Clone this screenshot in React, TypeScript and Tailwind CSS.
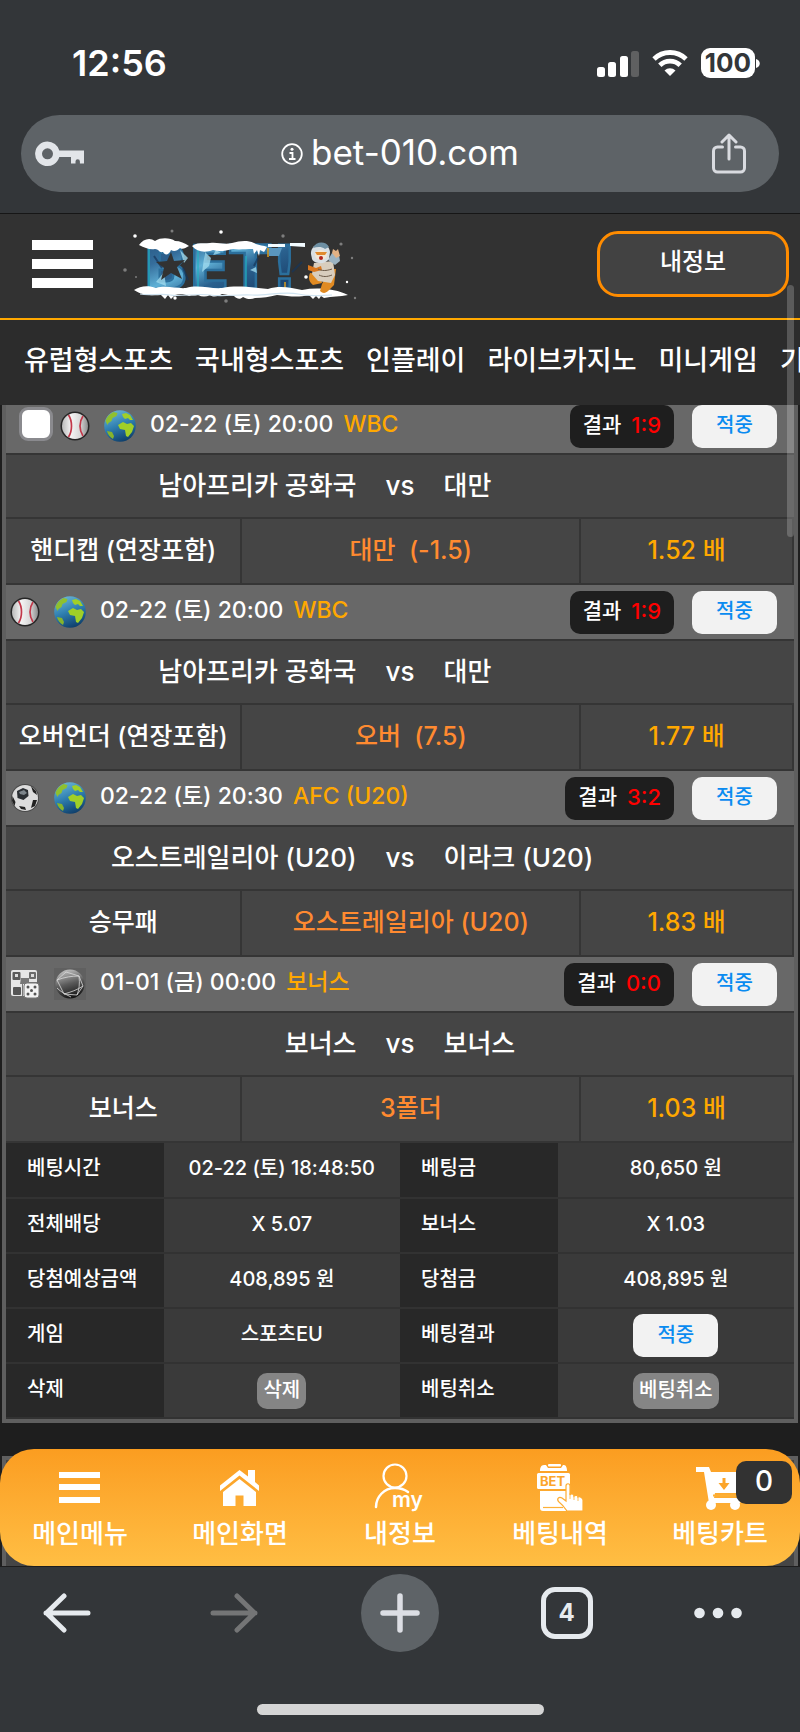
import { type ReactNode } from 'react';
import { clsx } from 'clsx';

type Sport = 'baseball' | 'soccer' | 'dice';

interface Bet {
    id: number;
    sport: Sport;
    date: string;
    league: string;
    score: string;
    home: string;
    away: string;
    market: string;
    pick: string;
    odds: string;
    selectable?: boolean;
}

const NAV = ['유럽형스포츠', '국내형스포츠', '인플레이', '라이브카지노', '미니게임', '기타'];

const BETS: Bet[] = [
    { id: 1, sport: 'baseball', date: '02-22 (토) 20:00', league: 'WBC', score: '1:9', home: '남아프리카 공화국', away: '대만', market: '핸디캡 (연장포함)', pick: '대만  (-1.5)', odds: '1.52 배', selectable: true },
    { id: 2, sport: 'baseball', date: '02-22 (토) 20:00', league: 'WBC', score: '1:9', home: '남아프리카 공화국', away: '대만', market: '오버언더 (연장포함)', pick: '오버  (7.5)', odds: '1.77 배' },
    { id: 3, sport: 'soccer', date: '02-22 (토) 20:30', league: 'AFC (U20)', score: '3:2', home: '오스트레일리아 (U20)', away: '이라크 (U20)', market: '승무패', pick: '오스트레일리아 (U20)', odds: '1.83 배' },
    { id: 4, sport: 'dice', date: '01-01 (금) 00:00', league: '보너스', score: '0:0', home: '보너스', away: '보너스', market: '보너스', pick: '3폴더', odds: '1.03 배' },
];

const BaseballIcon = () => (
    <svg viewBox="0 0 32 32" className="h-8 w-8" aria-hidden="true">
        <defs>
            <linearGradient id="leather" x1="0" y1="0" x2="1" y2="0">
                <stop offset="0" stopColor="#b9b9b9" />
                <stop offset="0.35" stopColor="#f4f4f4" />
                <stop offset="0.7" stopColor="#d8d8d8" />
                <stop offset="1" stopColor="#8c8c8c" />
            </linearGradient>
        </defs>
        <circle cx="16" cy="16" r="14.5" fill="#262626" />
        <circle cx="16" cy="16" r="13" fill="url(#leather)" />
        <path d="M9.500 5c4 6 4 16 0 22M24 6c-4 6-4 14 0 20" fill="none" stroke="#c2384a" strokeWidth="1.700" />
    </svg>
);

const SoccerIcon = () => (
    <svg viewBox="0 0 32 32" className="h-8 w-8" aria-hidden="true">
        <circle cx="16" cy="16" r="14" fill="#4a4a4a" />
        <circle cx="16" cy="16" r="13" fill="#dcdcdc" />
        <path d="M8 9l6-3 5 2 .5 6-5 4-6-2z" fill="#2b2f33" />
        <path d="M10 10l5-2 3 3-3 2-4-1z" fill="#7d858b" />
        <path d="M22 4l5 5 1 4-4-3zM3.500 14l3 6-1 4-2.500-5zM24 18l4 0-2 6-4 2zM10 24l6 1 1 3-5-1z" fill="#222" />
    </svg>
);

const DiceIcon = () => (
    <svg viewBox="0 0 32 32" className="h-8 w-8" aria-hidden="true">
        <rect x="2" y="2" width="26" height="26" rx="2" fill="#e6e6e6" />
        <rect x="3.500" y="4" width="8" height="8" rx="1" fill="#5a5a5a" />
        <rect x="6" y="6" width="3" height="3" fill="#ddd" />
        <rect x="20" y="4" width="7" height="7" rx="1" fill="#6b6b6b" />
        <rect x="22" y="6" width="3" height="3" fill="#ddd" />
        <rect x="4" y="19" width="8" height="8" rx="1" fill="#555" />
        <path d="M12 10h8v4h8v2H14v12h-1V16h-2z" fill="#777" />
        <rect x="15" y="15" width="15" height="15" rx="3" fill="#f3f3f3" stroke="#777" strokeWidth="1" />
        <g fill="#555">
            <circle cx="19" cy="19" r="1.500" />
            <circle cx="26" cy="19" r="1.500" />
            <circle cx="22.500" cy="22.500" r="1.500" />
            <circle cx="19" cy="26" r="1.500" />
            <circle cx="26" cy="26" r="1.500" />
        </g>
    </svg>
);

const GlobeIcon = () => (
    <svg viewBox="0 0 32 32" className="h-8 w-8" aria-hidden="true">
        <defs>
            <linearGradient id="sea" x1="0.2" y1="0" x2="0.6" y2="1">
                <stop offset="0" stopColor="#6db9d8" />
                <stop offset="0.5" stopColor="#2f7fb0" />
                <stop offset="1" stopColor="#0f3f6b" />
            </linearGradient>
        </defs>
        <circle cx="16" cy="16" r="15.800" fill="url(#sea)" />
        <path d="M1.500 11c1-4 4-7 8-9l4 1-1 3-4 2-1 3-3 2-1 2z" fill="#8fc02f" />
        <path d="M18 4l4-1 4 2 3 5-3 0-2-2-3 1-2-2zM14 15l5-3 4 2 4-1 3 3-2 6-4 5-2-1-1-6-5-1z" fill="#a0cf28" />
        <path d="M3 21l5 1 2 4-1 3c-3-2-5-4-6-8z" fill="#86b42c" />
    </svg>
);

const WireGlobeIcon = () => (
    <svg viewBox="0 0 32 32" className="h-8 w-8" aria-hidden="true">
        <defs>
            <linearGradient id="wire" x1="0.3" y1="0" x2="0.6" y2="1">
                <stop offset="0" stopColor="#c4c4c4" />
                <stop offset="0.5" stopColor="#5a5a5a" />
                <stop offset="1" stopColor="#101010" />
            </linearGradient>
        </defs>
        <rect width="32" height="32" fill="#606060" />
        <circle cx="16" cy="16" r="14.500" fill="url(#wire)" />
        <path d="M3 12l9-8 13 4 4 10-6 9-13-1-7-14zM3 12c8-3 15-4 22-4M25 8c1 8 0 14-2 19M10 26c7-2 13-4 19-8M3 20c4 4 8 6 14 9" fill="none" stroke="#d9d9d9" strokeWidth="0.800" />
    </svg>
);

const SPORT_ICONS: Record<Sport, ReactNode> = {
    baseball: <BaseballIcon />,
    soccer: <SoccerIcon />,
    dice: <DiceIcon />,
};

const Logo = () => (
    <svg viewBox="120 226 240 80" className="h-20 w-60" role="img" aria-label="BET!">
        <defs>
            <linearGradient id="ice" x1="0" y1="0" x2="1" y2="1">
                <stop offset="0" stopColor="#23527d" />
                <stop offset="0.25" stopColor="#356d9b" />
                <stop offset="0.42" stopColor="#5fb0d6" />
                <stop offset="0.58" stopColor="#2a618f" />
                <stop offset="0.8" stopColor="#1c4570" />
                <stop offset="1" stopColor="#3a6a9c" />
            </linearGradient>
        </defs>
        {/* fills the counters of the B so that only the star stays open */}
        <rect x="156" y="250" width="22" height="34" fill="#2c5f8c" />
        <text x="143" y="289" fontFamily="DejaVu Sans" fontWeight="700" fontSize="60" fill="url(#ice)" stroke="#2b6f9c" strokeWidth="2.500">BET!</text>
        <path d="M149 247v41M198 249v38M246 256v31" fill="none" stroke="#22b3c2" strokeWidth="1.200" />
        <path d="M156 282l8-10 2 14zM180 250l8 8-4 5zM205 252l6 6-2 8-7 6zM216 250l5 3-8 2zM250 270l6-3 1 6z" fill="#9fd9ee" opacity="0.8" />
        <path d="M154 256l8 12M183 268l5 12M258 258l-4 8M292 272l10-10" fill="none" stroke="#15355a" strokeWidth="2" opacity="0.7" />
        <path d="M171 252l3 9 11-1-8 7 5 12-11-6-10 7 3-12-8-6 11-1z" fill="#323232" />
        <path d="M139 245c4-6 11-8 16-4 6-4 16-3 20 0 5 0 10 2 14 5-4 2-6 4-9 2-3 3-6 4-9 2-2 5-6 6-8 2-4 1-4-3-8-3-5 1-10-1-16-4z" fill="#fff" />
        <path d="M192 246c5-4 12-2 18-3 8-1 14 2 22 0 8-2 15-3 22 0 5 3 10 2 13 4l-3 5-4-2-1 6-2-6-3 4-1-5c-8 0-14 1-20 0-8 2-14 3-20 1-8 3-16 2-21-4z" fill="#fff" />
        <path d="M268 244h17v3h-17zM290 243h15v4l-15-1z" fill="#f2fbff" />
        <path d="M269 248h13l-3 8h-10z" fill="#5a97bf" />
        <path d="M268 248v9M285 282v6" stroke="#d99a1c" strokeWidth="1.500" />
        <path d="M134 290c6-4 14-5 22-2 10-3 22 1 30 0 12-4 24 1 36 0 14-3 28-1 46 1 12-4 24-1 34 1 16-3 34-1 46 5-8 2-16 1-24 3l-3-2-2 3-3-3-3 3-4-4c-12 3-20 1-32 0-8 2-14 3-22 3-4 2-9 1-12-1-3 3-6 2-9-1l-12-2c-4 2-8 4-12 1-4 2-8 2-12 0-4 1-6 0-9 1-4-2-10-2-14-1l-4 4-3-4-3 4-4-4c-9 1-20 0-27-5z" fill="#fff" />
        <path d="M140 294c10 2 20-1 30 1s28-2 40 0 30-1 42 0 32-4 46-1 24 1 34 1" fill="none" stroke="#cfe3f0" strokeWidth="1.200" />
        {/* mascot */}
        <path d="M310 273c-2 5-1 9 3 12l9-2-2-9zM322 284l-2 7c3 3 6 2 8 0l6-6 2-16-6 0z" fill="#e08a22" />
        <path d="M314 263l19-2 2 14-4 8-13-2-6-7z" fill="#d8cdbd" />
        <path d="M308 265l8 3 5-2 1 4-8 2-6-2z" fill="#d9771f" />
        <path d="M328 260l7 5 5-4-1-6-7-2z" fill="#9bb3c2" />
        <path d="M332 253l1-4 3 2 2-2 2 7-4 2z" fill="#e2b184" />
        <path d="M311 254c-1-12 18-14 19-2l-1 7c-4 6-15 5-17 0z" fill="#d9dfe3" />
        <path d="M313 248c3-7 13-7 16-1l-4 2c-4-3-8-2-12-1z" fill="#6d8fa3" />
        <ellipse cx="321" cy="255" rx="6" ry="5" fill="#f3e6d4" />
        <path d="M315 252h12l-2 3h-8z" fill="#e08a2e" />
        <circle cx="321" cy="258" r="2" fill="#b3261e" />
        <path d="M318 269c4 2 8 2 14 0M319 275c4 2 8 2 13 0" fill="none" stroke="#6b5a48" strokeWidth="1" />
        <g fill="#fff">
            <circle cx="135" cy="236" r="1.800" />
            <circle cx="221" cy="232" r="1.800" />
            <circle cx="306" cy="277" r="1.800" />
            <circle cx="347" cy="282" r="1.200" />
            <circle cx="175" cy="298" r="1.700" />
        </g>
        <g fill="#7d7d7d">
            <circle cx="172" cy="231" r="1.500" />
            <circle cx="283" cy="236" r="1.700" />
            <circle cx="341" cy="244" r="1.600" />
            <circle cx="352" cy="258" r="1.200" />
            <circle cx="125" cy="270" r="1.800" />
            <circle cx="136" cy="277" r="1" />
            <circle cx="226" cy="301" r="1.800" />
            <circle cx="355" cy="298" r="1.200" />
        </g>
    </svg>
);

const StatusBar = () => (
    <div className="flex h-[115px] items-start justify-between pt-[43px] pr-10 pl-[72px]">
        <span className="text-[36px] leading-[40px] font-semibold">12:56</span>
        <div className="flex h-10 items-center">
            <svg viewBox="0 0 42 27" className="h-[27px] w-[42px]" aria-label="signal">
                <rect x="0" y="17" width="8" height="10" rx="2.500" fill="#fff" />
                <rect x="11" y="12" width="8" height="15" rx="2.500" fill="#fff" />
                <rect x="23" y="6" width="8" height="21" rx="2.500" fill="#fff" />
                <rect x="34" y="1" width="8" height="26" rx="2.500" fill="#5f6061" />
            </svg>
            <svg viewBox="0 0 36 26" className="ml-[13px] h-[26px] w-9" aria-label="wifi">
                <g fill="none" stroke="#fff" strokeWidth="4.800">
                    <path d="M2 9a23 23 0 0 1 32 0" />
                    <path d="M7.800 15.300a14.700 14.700 0 0 1 20.400 0" />
                </g>
                <path d="M18 26l-5.500-5.500a8 8 0 0 1 11 0z" fill="#fff" />
            </svg>
            <span className="ml-[13px] flex h-[30px] w-[54px] items-center justify-center rounded-[9px] bg-white text-[26px] leading-[30px] font-bold text-[#333639]">100</span>
            <svg viewBox="0 0 4 9" className="ml-px h-[9px] w-1" aria-hidden="true">
                <path d="M0 0c5 1 5 8 0 9z" fill="#fff" />
            </svg>
        </div>
    </div>
);

const AddressBar = () => (
    <div className="px-[21px] pb-[21px]">
        <div className="flex h-[77px] items-center justify-between rounded-full bg-[#5e6367] pr-8 pl-3.5">
            <button aria-label="비밀번호" className="flex w-[60px]">
                <svg viewBox="0 0 50 26" className="h-[26px] w-[50px]">
                    <path d="M12.500.500a12.300 12.300 0 1 0 11.800 15.500h11.700v6.500h4.500v-2a2.200 2.200 0 0 1 4.400 0v2h4.100V9.500H24.300A12.300 12.300 0 0 0 12.500.500zm0 6.800a5.500 5.500 0 1 1 0 11 5.500 5.500 0 0 1 0-11z" fill="#e2e5e9" fillRule="evenodd" />
                </svg>
            </button>
            <div className="flex items-center gap-2 pb-1 pl-[18px]">
                <svg viewBox="0 0 22 22" className="mt-1 h-[22px] w-[22px]" aria-hidden="true">
                    <circle cx="11" cy="11" r="9.800" fill="none" stroke="#fff" strokeWidth="1.800" />
                    <circle cx="11" cy="6.300" r="1.500" fill="#fff" />
                    <path d="M8.500 10h3v5.500M8 16h6.500" fill="none" stroke="#fff" strokeWidth="1.800" />
                </svg>
                <span className="text-[35px] leading-[40px]">bet-010.com</span>
            </div>
            <button aria-label="공유" className="flex w-[60px] justify-end pr-px">
                <svg viewBox="0 0 34 41" className="h-[41px] w-[34px]" fill="none" stroke="#d9dbe0" strokeWidth="3" strokeLinecap="round" strokeLinejoin="round">
                    <path d="M10.500 14H5.500a4 4 0 0 0-4 4v17a4 4 0 0 0 4 4h23a4 4 0 0 0 4-4V18a4 4 0 0 0-4-4h-5M17 26V3M10 9l7-7 7 7" />
                </svg>
            </button>
        </div>
    </div>
);

const Badge = ({ className, children }: { className?: string; children: ReactNode }) => (
    <span className={clsx('inline-flex h-[43px] items-center justify-center rounded-[10px] pb-0.5', className)}>{children}</span>
);

const Hit = () => <Badge className="w-[85px] bg-[#f2f2f2] text-xl text-[#0a8bf0]">적중</Badge>;

const BetItem = ({ bet }: { bet: Bet }) => (
    <li>
        <div className="flex h-14 items-center border-b-2 border-[#353535] bg-[#686868] pr-[17px] pl-[3px]">
            {bet.selectable && (
                <input
                    type="checkbox"
                    aria-label="베팅 선택"
                    className="mr-1.5 mb-1 ml-2.5 h-[34px] w-[34px] appearance-none rounded-[9px] border-[3px] border-[#8a8a8e] bg-white"
                />
            )}
            {SPORT_ICONS[bet.sport]}
            <span className="ml-[13px]">{bet.sport === 'dice' ? <WireGlobeIcon /> : <GlobeIcon />}</span>
            <span className="ml-3.5 pb-1 text-[23px]">{bet.date}</span>
            <span className="ml-2.5 pb-1 text-[23px] text-[#ffa800]">{bet.league}</span>
            <Badge className="ml-auto gap-2.5 bg-[#1e1e1e] px-[13px] text-[21px]">
                결과 <span className="text-[22px] text-[#ff0000]">{bet.score}</span>
            </Badge>
            <span className="ml-[18px] flex"><Hit /></span>
        </div>
        <div className="grid h-16 grid-cols-[1fr_auto_1fr] items-center gap-[29px] border-b-2 border-[#353535] bg-[#454545] pb-0.5 text-[26px]">
            <span className="text-right">{bet.home}</span>
            <span>vs</span>
            <span>{bet.away}</span>
        </div>
        <div className="grid h-[66px] grid-cols-[30%_43%_27%] border-b-2 border-[#353535] bg-[#454545] text-center text-[25px] leading-[62px] whitespace-pre">
            <span className="border-r-2 border-[#353535]">{bet.market}</span>
            <span className="border-r-2 border-[#353535] text-[#ff8a30]">{bet.pick}</span>
            <span className="border-r-2 border-[#353535] text-[#ffa800]">{bet.odds}</span>
        </div>
    </li>
);

const SmallButton = ({ children }: { children: ReactNode }) => (
    <button className="inline-flex h-9 items-center justify-center rounded-[10px] bg-[#858585] px-1.5 pb-0.5">{children}</button>
);

const SUMMARY: [string, ReactNode, string, ReactNode][] = [
    ['베팅시간', '02-22 (토) 18:48:50', '베팅금', '80,650 원'],
    ['전체배당', 'X 5.07', '보너스', 'X 1.03'],
    ['당첨예상금액', '408,895 원', '당첨금', '408,895 원'],
    ['게임', '스포츠EU', '베팅결과', <Hit />],
    ['삭제', <SmallButton>삭제</SmallButton>, '베팅취소', <SmallButton>베팅취소</SmallButton>],
];

const Summary = () => (
    <table className="w-full table-fixed border-collapse text-xl">
        <colgroup>
            <col className="w-1/5" />
            <col className="w-3/10" />
            <col className="w-1/5" />
            <col className="w-3/10" />
        </colgroup>
        <tbody>
            {SUMMARY.map(([labelA, valueA, labelB, valueB]) => (
                <tr key={labelA} className="h-[55px] border-b-2 border-[#323232]">
                    <th scope="row" className="bg-[#282828] p-0 pb-1 pl-[21px] text-left font-medium">{labelA}</th>
                    <td className="bg-[#3a3a3a] p-0"><span className={clsx('flex justify-center', typeof valueA === 'string' && 'pb-1')}>{valueA}</span></td>
                    <th scope="row" className="bg-[#282828] p-0 pb-1 pl-[21px] text-left font-medium">{labelB}</th>
                    <td className="bg-[#3a3a3a] p-0"><span className={clsx('flex justify-center', typeof valueB === 'string' && 'pb-1')}>{valueB}</span></td>
                </tr>
            ))}
        </tbody>
    </table>
);

const TABS: { label: string; icon: ReactNode }[] = [
    {
        label: '메인메뉴',
        icon: <path d="M4 11h41v6H4zM4 23h41v6H4zM4 36h41v6H4z" fill="#fff" />,
    },
    {
        label: '메인화면',
        icon: (
            <g fill="#fff">
                <path d="M24.500 9L5 24.500v5.500l19.500-15.500L44 30v-5.500l-4-3.500V9h-7v6.500z" />
                <path d="M24.500 18L8 31v14h12.500V34.500h8V45H41V31z" />
            </g>
        ),
    },
    {
        label: '내정보',
        icon: (
            <>
                <circle cx="20" cy="15" r="11.500" fill="none" stroke="#fff" strokeWidth="2.200" />
                <path d="M1 46c0-10 8-19 19-19 5 0 9 1 13 4" fill="none" stroke="#fff" strokeWidth="2.500" strokeLinecap="round" />
                <text x="17" y="46" fontFamily="Inter" fontWeight="600" fontSize="21" fill="#fff">my</text>
            </>
        ),
    },
    {
        label: '베팅내역',
        icon: (
            <>
                <path d="M5 10c0-3 1-6 4-6h2l2 3h13l2-3h1c2 0 3 3 3 6z" fill="#fff" />
                <rect x="13" y="3" width="13" height="2.500" rx="1" fill="#fff" />
                <rect x="2" y="12" width="33" height="16" rx="1.500" fill="#fff" />
                <text x="5" y="25" fontFamily="Inter" fontWeight="700" fontSize="13" fill="#fca52a">BET</text>
                <path d="M5 30h26v20H8a3 3 0 0 1-3-3z" fill="#fff" />
                <path d="M8 46.500h20" stroke="#fdb138" strokeWidth="1.200" />
                <path d="M31 25c0-3 4-3 4 0v9c1-2 4-1 4 1 1-1 4-1 4 1 2-1 5 1 5 3v11H32c-2-3-4-6-8-9-3-3 0-6 3-4l4 3z" fill="#fff" stroke="#fdac33" strokeWidth="1.200" />
                <path d="M35 32v6M39 34v5M43 35v5" stroke="#fdb138" strokeWidth="0.800" />
            </>
        ),
    },
    {
        label: '베팅카트',
        icon: (
            <>
                <path d="M1 6h13l2 5h33v21H20l-1 5h28l-2 5H14L9 11H1z" fill="#fff" />
                <path d="M18 34.500h30" stroke="#fdb037" strokeWidth="2" />
                <path d="M27.500 17h3v5h4l-5.500 7-5.500-7h4z" fill="#fca52a" />
                <circle cx="16" cy="44" r="5" fill="#fff" />
                <circle cx="40" cy="44" r="5" fill="#fff" />
            </>
        ),
    },
];

const TabBar = () => (
    <div className="relative bg-[#1e1e1e] pt-[26px]">
        {/* top of the next bet slip, showing behind the rounded corners */}
        <div className="absolute inset-x-0.5 top-[33px] bottom-0 border-4 border-b-0 border-[#5f5f5f] bg-[#454545]" />
        <nav className="relative grid h-[117px] grid-cols-5 rounded-[34px] bg-linear-to-b from-[#fb9d20] to-[#ffbe43]">
            {TABS.map((tab) => (
                <button key={tab.label} className="flex flex-col items-center pt-3">
                    <svg viewBox="0 0 50 52" className="h-[52px] w-[50px] overflow-visible" aria-hidden="true">{tab.icon}</svg>
                    <span className="text-[26px] leading-[42px]">{tab.label}</span>
                </button>
            ))}
            <span className="absolute top-3 right-2 flex h-[43px] w-[56px] items-center justify-center rounded-[10px] bg-[#323232] pb-1 text-[28px]">0</span>
        </nav>
    </div>
);

const BrowserToolbar = () => (
    <footer className="border-t border-[#1e1e1e] bg-[#333639]">
        <div className="flex h-[92px] items-center justify-between px-7">
            <button aria-label="뒤로" className="flex w-[78px] justify-center">
                <svg viewBox="0 0 48 40" className="h-10 w-12" fill="none" stroke="#e6eaee" strokeWidth="5" strokeLinecap="round" strokeLinejoin="round">
                    <path d="M45 20H3M21 3L3.500 20 21 37" />
                </svg>
            </button>
            <button aria-label="앞으로" className="flex w-[78px] justify-center">
                <svg viewBox="0 0 48 40" className="h-10 w-12" fill="none" stroke="#747576" strokeWidth="5" strokeLinecap="round" strokeLinejoin="round">
                    <path d="M3 20h42M27 3l17.500 17L27 37" />
                </svg>
            </button>
            <button aria-label="새 탭" className="flex h-[78px] w-[78px] items-center justify-center rounded-full bg-[#5e6367]">
                <svg viewBox="0 0 40 40" className="h-10 w-10" stroke="#dcdee4" strokeWidth="5.500" strokeLinecap="round">
                    <path d="M20 3v34M3 20h34" />
                </svg>
            </button>
            <button aria-label="탭 4개" className="flex w-[78px] justify-center">
                <span className="flex h-[52px] w-[52px] items-center justify-center rounded-[14px] border-[5px] border-[#e6eaee] text-2xl font-bold text-[#e6eaee]">4</span>
            </button>
            <button aria-label="더보기" className="flex w-[78px]">
                <svg viewBox="0 0 48 12" className="h-3 w-12" fill="#e6eaee">
                    <circle cx="5.500" cy="6" r="5.300" />
                    <circle cx="24" cy="6" r="5.300" />
                    <circle cx="42.500" cy="6" r="5.300" />
                </svg>
            </button>
        </div>
        <div className="flex h-[73px] justify-center pt-[45px]">
            <div className="h-[11px] w-[287px] rounded-full bg-[#d5d5d5]" />
        </div>
    </footer>
);

export default function App() {
    return (
        <div className="relative overflow-hidden bg-[#1e1e1e] font-['Inter','Noto_Sans_CJK_KR',sans-serif] font-medium text-white">
            <div className="border-b border-[#161616] bg-[#333639] font-normal">
                <StatusBar />
                <AddressBar />
            </div>

            <header className="flex h-[106px] items-center border-b-2 border-[#ffa800] bg-[#323232] pr-[11px] pb-1 pl-8">
                <button aria-label="메뉴" className="flex w-[61px] flex-col gap-[9px]">
                    <span className="h-2.5 bg-white" />
                    <span className="h-2.5 bg-white" />
                    <span className="h-2.5 bg-white" />
                </button>
                <a href="#" className="ml-[27px] block pt-1"><Logo /></a>
                <button className="ml-auto h-[66px] w-48 rounded-[21px] border-[3px] border-[#ff8c00] bg-[#424242] pb-1 text-2xl">내정보</button>
            </header>

            <nav className="flex h-[85px] items-center gap-[22px] overflow-hidden bg-[#2c2c2c] pl-6 text-[27px] whitespace-nowrap">
                {NAV.map((item) => (
                    <a key={item} href="#" className="shrink-0 pb-0.5">{item}</a>
                ))}
            </nav>

            <main className="overflow-hidden">
                <section className="mx-0.5 -mt-1.5 border-4 border-t-0 border-[#5f5f5f]">
                    <ul>
                        {BETS.map((bet) => <BetItem key={bet.id} bet={bet} />)}
                    </ul>
                    <Summary />
                </section>
            </main>

            <TabBar />
            <BrowserToolbar />

            {/* scroll thumb */}
            <div className="absolute top-[285px] right-1.5 h-[252px] w-[7px] rounded-full bg-white/20" />
        </div>
    );
}
